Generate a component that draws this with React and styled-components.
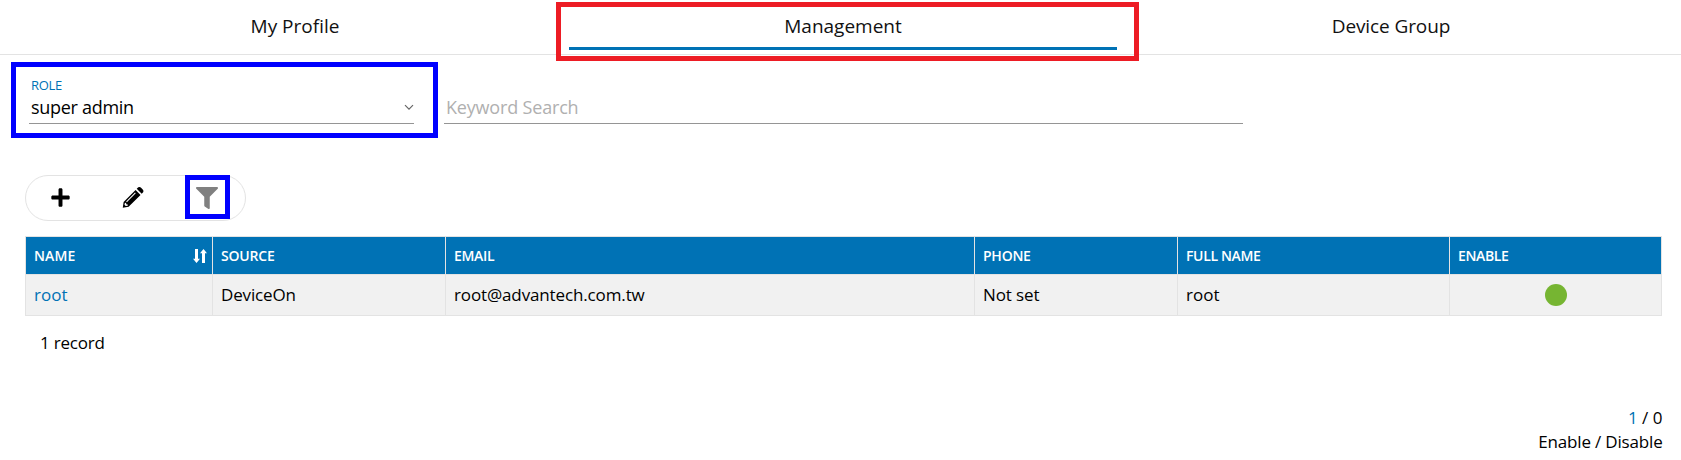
import React from "react";
import styled, { createGlobalStyle, css } from "styled-components";
import { FaPlus, FaFilter } from "react-icons/fa";

const GlobalStyle = createGlobalStyle`
  * { box-sizing: border-box; }
  body { margin: 0; background: #fff; color: #000; font-family: "Open Sans", "Noto Sans", sans-serif; font-size: 17px; }
`;

const Text = styled.span`
  white-space: nowrap;
  letter-spacing: ${(p) => p.$track || 0}px;
`;

const Page = styled.div`
  width: 100%;
  height: 460px;
  overflow: hidden;
  display: flex;
  flex-direction: column;
`;

const Highlight = styled.div`
  position: absolute;
  pointer-events: none;
  border: 5px solid ${(p) => p.$color};
`;

const TabBar = styled.nav`
  display: grid;
  grid-template-columns: repeat(3, 548px);
  padding-left: 21px;
  height: 55px;
  border-bottom: 1px solid #e3e3e3;
`;

const Tab = styled.div`
  position: relative;
  display: flex;
  justify-content: center;
  height: 50px;
  font-size: 19px;
  line-height: 53px;
  color: #111;
  border-bottom: 3px solid ${(p) => (p.$active ? "#0072b5" : "transparent")};
`;

const TabHighlight = styled(Highlight)`
  left: -13px;
  right: -22px;
  top: 2px;
  height: 59px;
`;

const Filters = styled.section`
  display: flex;
  gap: 30px;
  height: 69px;
  padding-left: 29px;
`;

const Field = styled.div`
  position: relative;
  width: ${(p) => p.$width}px;
  display: flex;
  flex-direction: column;
  border-bottom: 1px solid #959595;
  padding: 22px 2px 0;
`;

const FieldHighlight = styled(Highlight)`
  left: -18px;
  right: -24px;
  top: 7px;
  height: 76px;
`;

const Label = styled.label`
  height: 18px;
  line-height: 16px;
  font-size: 13px;
  letter-spacing: -0.3px;
  color: #0072b5;
`;

const Value = styled.div`
  display: flex;
  align-items: center;
  justify-content: space-between;
  height: 24px;
  font-size: 18px;
  line-height: 24px;
  color: ${(p) => (p.$placeholder ? "#b0b0b0" : "#000")};
  svg { margin-right: -2px; }
`;

const Toolbar = styled.div`
  display: flex;
  align-items: center;
  width: 221px;
  height: 46px;
  margin: 51px 0 0 25px;
  padding-left: 23px;
  border: 1px solid #e3e3e3;
  border-radius: 23px;
`;

const IconButton = styled.button`
  position: relative;
  display: flex;
  align-items: center;
  justify-content: center;
  width: 22px;
  height: 44px;
  padding: 0 0 1px;
  margin-right: ${(p) => p.$gap || 0}px;
  border: 0;
  background: none;
  color: ${(p) => p.$color || "#000"};
`;

const ButtonHighlight = styled(Highlight)`
  left: -11px;
  top: -1px;
  width: 45px;
  height: 44px;
`;

const Table = styled.div`
  width: 1637px;
  margin: 15px 0 0 25px;
  border-left: 1px solid #e3e3e3;
  border-top: 1px solid #e3e3e3;
`;

const Row = styled.div`
  display: grid;
  grid-template-columns: 187px 233px 529px 203px 272px 1fr;
`;

const cell = css`
  display: flex;
  align-items: center;
  border-right: 1px solid #e3e3e3;
`;

const HeadCell = styled.div`
  ${cell}
  justify-content: space-between;
  height: 37px;
  padding: 0 5px 0 8px;
  line-height: 37px;
  background: #0072b5;
  color: #fff;
  font-size: 14px;
  font-weight: 600;
`;

const Cell = styled.div`
  ${cell}
  justify-content: ${(p) => (p.$center ? "center" : "flex-start")};
  height: 42px;
  padding: ${(p) => (p.$center ? "0" : "0 4px 0 8px")};
  line-height: 40px;
  border-top: 1px solid #e3e3e3;
  border-bottom: 1px solid #e3e3e3;
  background: #f1f1f1;
  color: ${(p) => (p.$link ? "#0072b5" : "#000")};
`;

const StatusDot = styled.i`
  width: 22px;
  height: 22px;
  margin-bottom: 1px;
  border-radius: 50%;
  background: #76b532;
`;

const RecordCount = styled.p`
  margin: 15px 0 0 40px;
  height: 24px;
  line-height: 24px;
`;

const Summary = styled.footer`
  display: flex;
  flex-direction: column;
  align-items: flex-end;
  margin: 51px 18.5px 0 0;
  line-height: 24px;
`;

const Count = styled.span`
  color: #0072b5;
`;

const Chevron = () => (
  <svg width="10" height="7" viewBox="0 0 10 7" fill="none" stroke="#666" strokeWidth="1.2">
    <path d="M1 1.2L5 5.2L9 1.2" />
  </svg>
);

const Pencil = () => (
  <svg width="23" height="23" viewBox="0 0 23 23">
    <path fill="#000" d="M14.2 3.6L19.4 8.8L6.9 21.3L0.8 22.2L1.7 16.1ZM15.4 2.4L17 .9Q18.4 0 19.7 1.1L21.9 3.3Q23 4.6 22.1 6L20.6 7.6Z" />
    <path fill="none" stroke="#fff" strokeWidth="1.1" d="M4.7 16L14 6.7" />
    <path fill="#fff" d="M3 17.2L4.2 16.9L4.5 18.5L6.3 19L5.8 20.1L3.9 20.4L2.6 19.1Z" />
  </svg>
);

const SortArrows = () => (
  <svg width="14" height="14" viewBox="0 0 14 14" fill="#fff">
    <path d="M2 0H5V9.7H7L3.5 14L0 9.7H2ZM9 14H12V4.3H14L10.5 0L7 4.3H9Z" />
  </svg>
);

const tabs = [["My Profile", 0], ["Management", 0], ["Device Group", -0.1]];
const columns = [["NAME", 0.1], ["SOURCE", -0.2], ["EMAIL", -0.3], ["PHONE", -0.25], ["FULL NAME", -0.35], ["ENABLE", -0.35]];
const record = [["root", 0], ["DeviceOn", -0.15], ["root@advantech.com.tw", -0.13], ["Not set", -0.1], ["root", 0]];

export default function App() {
  return (
    <Page>
      <GlobalStyle />
      <TabBar>
        {tabs.map(([name, track]) => (
          <Tab key={name} $active={name === "Management"}>
            <Text $track={track}>{name}</Text>
            {name === "Management" && <TabHighlight $color="#ed1c24" />}
          </Tab>
        ))}
      </TabBar>
      <Filters>
        <Field $width={385}>
          <Label>ROLE</Label>
          <Value><Text $track={-0.3}>super admin</Text><Chevron /></Value>
          <FieldHighlight $color="#00f" />
        </Field>
        <Field $width={799}>
          <Label />
          <Value $placeholder><Text $track={-0.18}>Keyword Search</Text></Value>
        </Field>
      </Filters>
      <Toolbar>
        <IconButton $gap={51}><FaPlus size={21} /></IconButton>
        <IconButton $gap={52}><Pencil /></IconButton>
        <IconButton $color="#808080">
          <FaFilter size={22} />
          <ButtonHighlight $color="#00f" />
        </IconButton>
      </Toolbar>
      <Table>
        <Row>
          {columns.map(([name, track], i) => (
            <HeadCell key={name}><Text $track={track}>{name}</Text>{i === 0 && <SortArrows />}</HeadCell>
          ))}
        </Row>
        <Row>
          {record.map(([value, track], i) => (
            <Cell key={i} $link={i === 0}><Text $track={track}>{value}</Text></Cell>
          ))}
          <Cell $center><StatusDot /></Cell>
        </Row>
      </Table>
      <RecordCount><Text $track={-0.22}>1 record</Text></RecordCount>
      <Summary>
        <Text><Count>1</Count> / 0</Text>
        <Text $track={-0.18}>Enable / Disable</Text>
      </Summary>
    </Page>
  );
}
